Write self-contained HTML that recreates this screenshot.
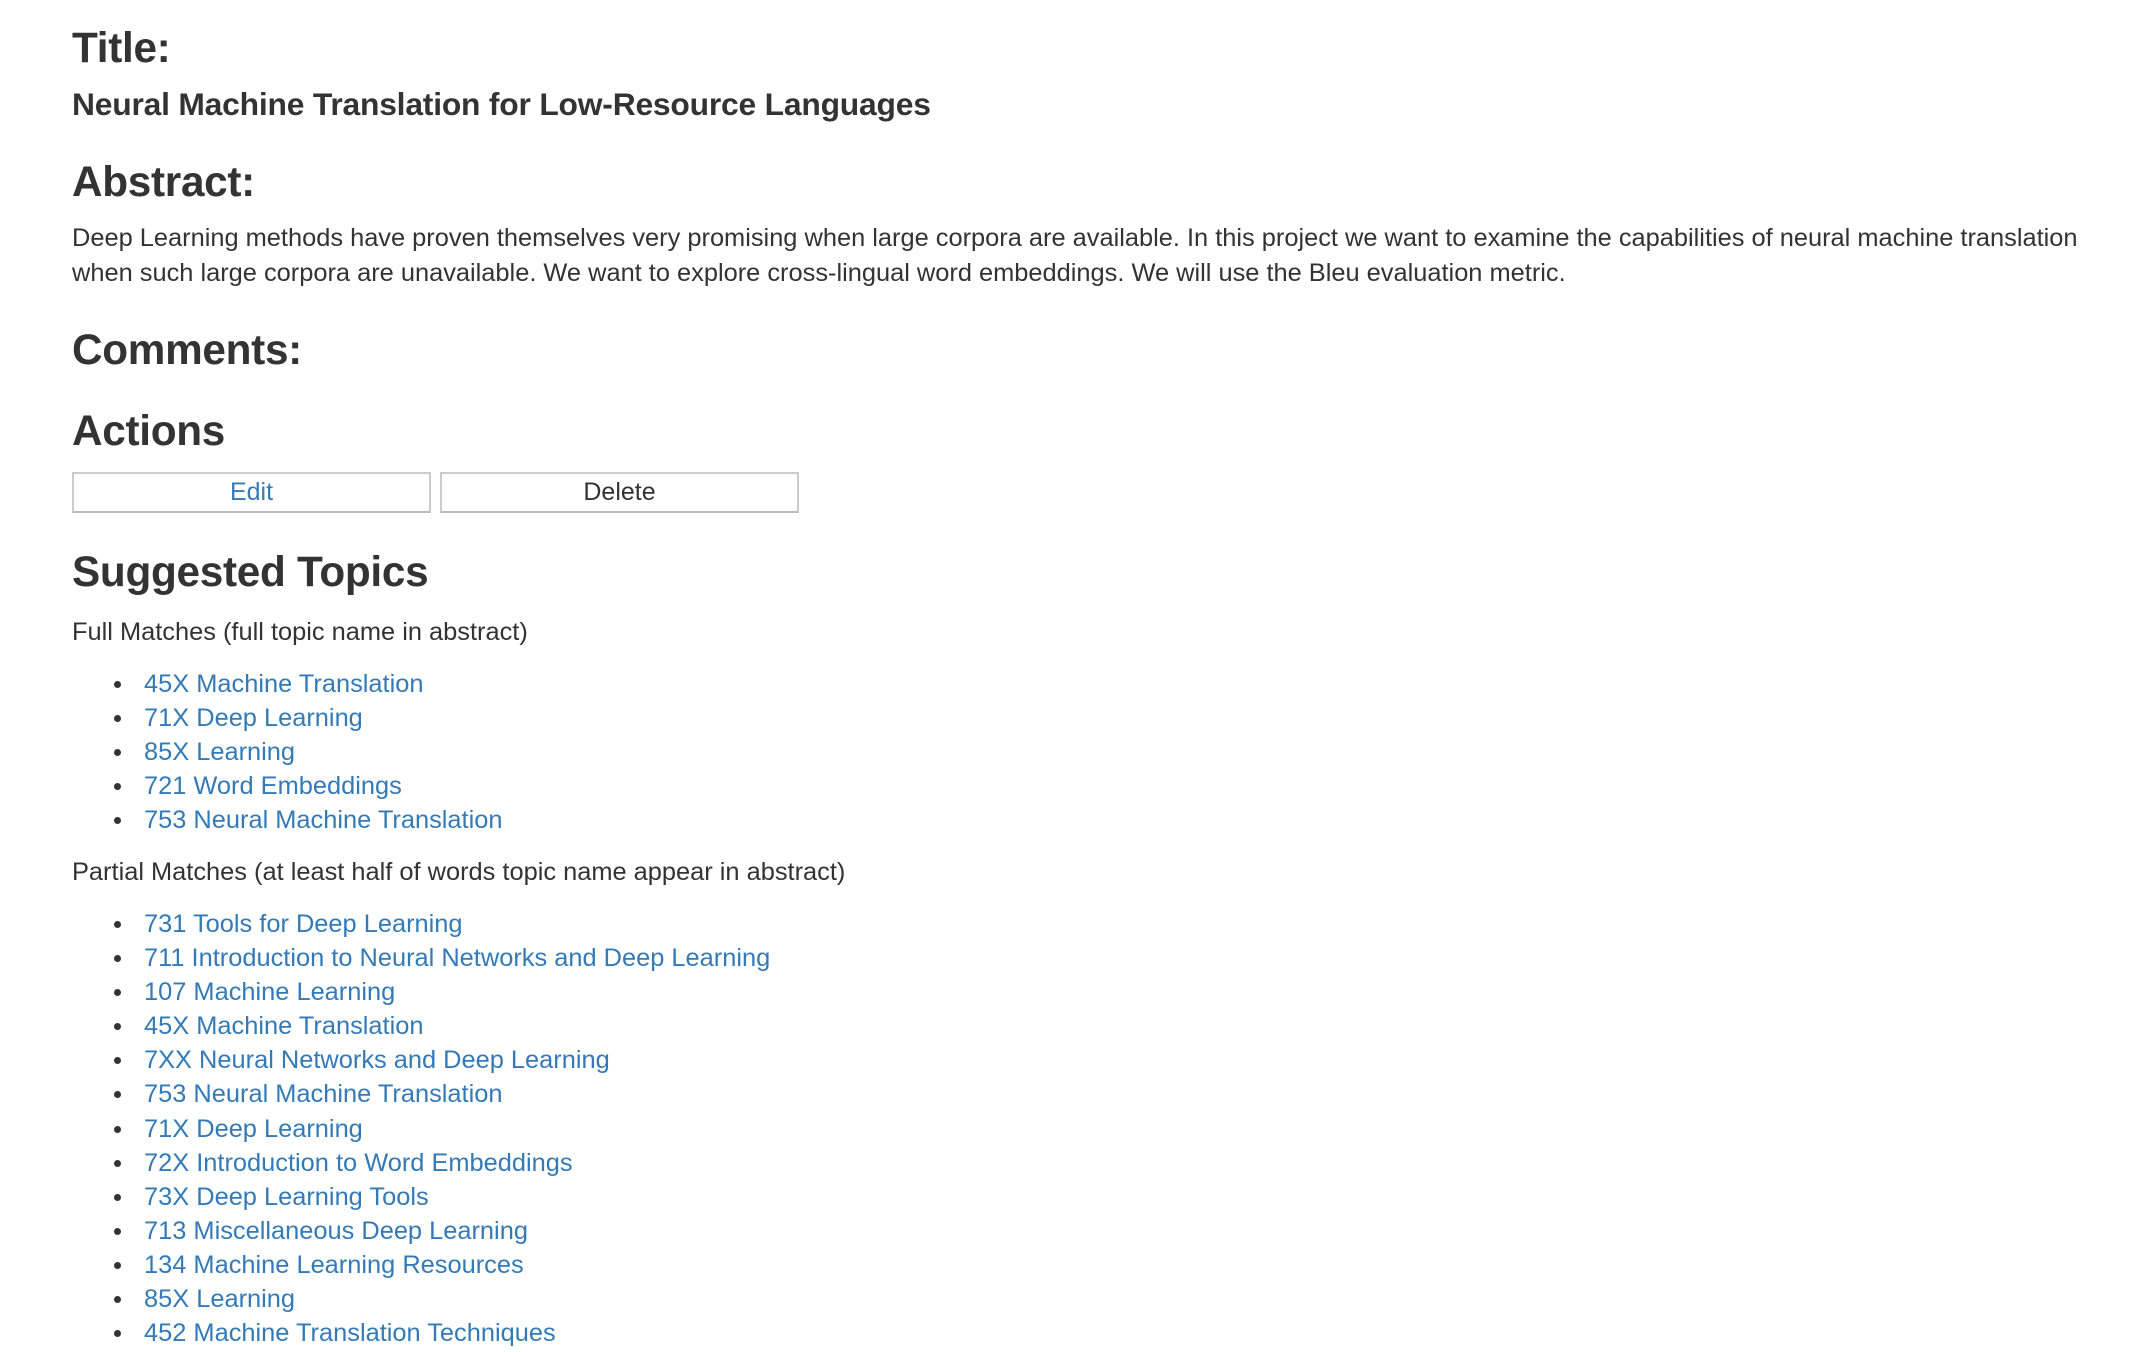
<!DOCTYPE html>
<html><head><meta charset="utf-8"><style>
body{margin:0;width:2136px;height:1352px;background:#fff;font-family:"Liberation Sans",Arial,sans-serif;color:#333;position:relative;overflow:hidden}
.a{position:absolute;white-space:nowrap;line-height:1}
.h{font-size:42.3px;font-weight:bold;left:72px;letter-spacing:-0.3px}
.t{font-size:25.4px;left:72px}
ul{position:absolute;left:0;margin:0;padding:0;list-style:none}
li{position:relative;height:34.1px;line-height:34.1px;font-size:25.4px;color:#337ab7;padding-left:144px;white-space:nowrap}
li:before{content:"";position:absolute;left:114px;top:14px;width:7px;height:7px;border-radius:50%;background:#333}
.btn{position:absolute;top:472px;height:37px;width:355px;border:2px solid #ccc;border-bottom-color:#bbb;font-size:25px;text-align:center;line-height:37px}
</style></head><body>
<div class="a h" style="top:27px">Title:</div>
<div class="a" style="top:89px;left:72px;font-size:31.8px;font-weight:bold;letter-spacing:-0.2px">Neural Machine Translation for Low-Resource Languages</div>
<div class="a h" style="top:161px">Abstract:</div>
<div class="a t" style="top:226px">Deep Learning methods have proven themselves very promising when large corpora are available. In this project we want to examine the capabilities of neural machine translation</div>
<div class="a t" style="top:261px">when such large corpora are unavailable. We want to explore cross-lingual word embeddings. We will use the Bleu evaluation metric.</div>
<div class="a h" style="top:329px">Comments:</div>
<div class="a h" style="top:410px">Actions</div>
<div class="btn" style="left:72px;color:#337ab7">Edit</div>
<div class="btn" style="left:440px">Delete</div>
<div class="a h" style="top:551px">Suggested Topics</div>
<div class="a t" style="top:620px">Full Matches (full topic name in abstract)</div>
<ul style="top:667px">
<li>45X Machine Translation</li>
<li>71X Deep Learning</li>
<li>85X Learning</li>
<li>721 Word Embeddings</li>
<li>753 Neural Machine Translation</li>
</ul>
<div class="a t" style="top:860px">Partial Matches (at least half of words topic name appear in abstract)</div>
<ul style="top:907px">
<li>731 Tools for Deep Learning</li>
<li>711 Introduction to Neural Networks and Deep Learning</li>
<li>107 Machine Learning</li>
<li>45X Machine Translation</li>
<li>7XX Neural Networks and Deep Learning</li>
<li>753 Neural Machine Translation</li>
<li>71X Deep Learning</li>
<li>72X Introduction to Word Embeddings</li>
<li>73X Deep Learning Tools</li>
<li>713 Miscellaneous Deep Learning</li>
<li>134 Machine Learning Resources</li>
<li>85X Learning</li>
<li>452 Machine Translation Techniques</li>
</ul>
</body></html>
